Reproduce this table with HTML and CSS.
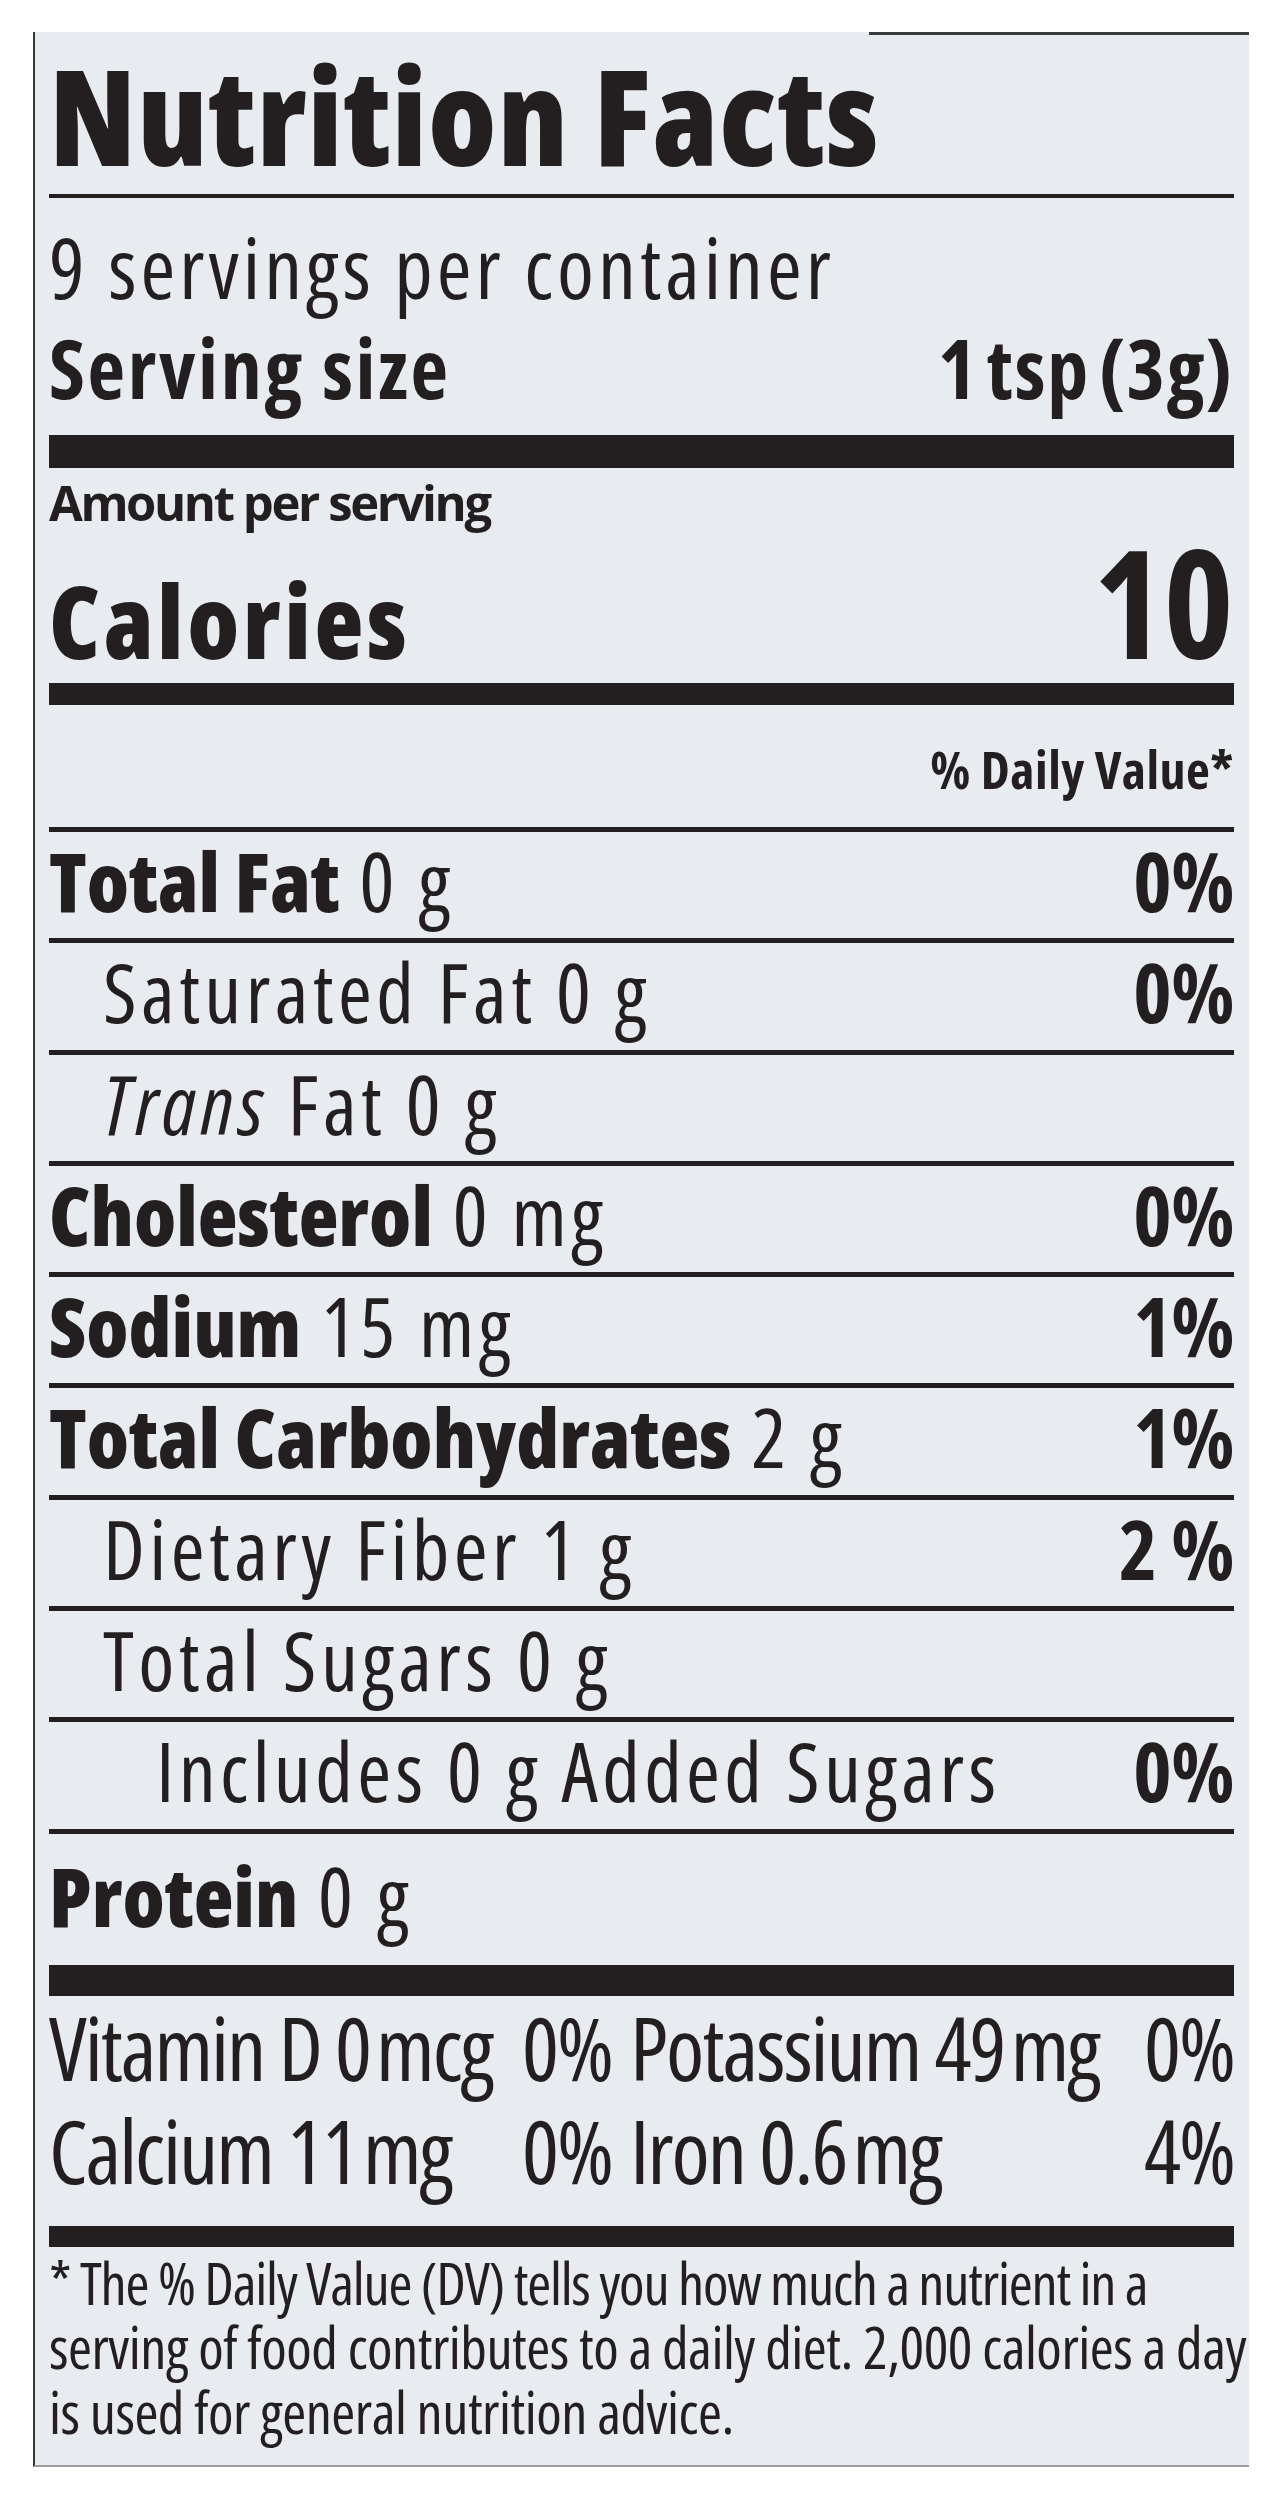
FILE: index.html
```html
<!DOCTYPE html>
<html lang="en">
<head>
<meta charset="utf-8">
<title>Nutrition Facts</title>
<link rel="stylesheet" href="styles.css">
</head>
<body>
<div class="label">
  <h1 class="title">Nutrition Facts</h1>
  <div class="rule-thin"></div>
  <p class="servings">9 servings per container</p>
  <div class="serving-size"><span>Serving size</span><span class="ss-value">1 tsp (3g)</span></div>
  <div class="bar bar-top"></div>
  <p class="amount">Amount per serving</p>
  <div class="calories"><span class="cal-label">Calories</span><span class="cal-value">10</span></div>
  <div class="bar bar-cal"></div>
  <p class="dv-head">% Daily Value*</p>

  <div class="nutrient"><span class="name"><b>Total Fat</b><span class="amt"> 0 g</span></span><b class="pct">0%</b></div>
  <div class="nutrient"><span class="name indent1"><span class="amt">Saturated Fat 0 g</span></span><b class="pct">0%</b></div>
  <div class="nutrient"><span class="name indent1"><i>Trans</i><span class="amt"> Fat 0 g</span></span></div>
  <div class="nutrient"><span class="name"><b>Cholesterol</b><span class="amt"> 0 mg</span></span><b class="pct">0%</b></div>
  <div class="nutrient"><span class="name"><b>Sodium</b><span class="amt"> 15 mg</span></span><b class="pct">1%</b></div>
  <div class="nutrient"><span class="name"><b>Total Carbohydrates</b><span class="amt"> 2 g</span></span><b class="pct">1%</b></div>
  <div class="nutrient"><span class="name indent1"><span class="amt">Dietary Fiber 1 g</span></span><b class="pct">2 %</b></div>
  <div class="nutrient"><span class="name indent1"><span class="amt">Total Sugars 0 g</span></span></div>
  <div class="nutrient"><span class="name indent2"><span class="amt">Includes 0 g Added Sugars</span></span><b class="pct">0%</b></div>
  <div class="nutrient nutrient-last"><span class="name"><b>Protein</b><span class="amt"> 0 g</span></span></div>

  <div class="bar bar-vit"></div>
  <div class="minerals">
    <span>Vitamin D 0&#8239;mcg</span><span class="m-pct">0%</span><span class="m-name">Potassium 49&#8239;mg</span><span class="m-pct">0%</span>
    <span>Calcium 11&#8239;mg</span><span class="m-pct">0%</span><span class="m-name">Iron 0.6&#8239;mg</span><span class="m-pct">4%</span>
  </div>
  <div class="bar bar-foot"></div>
  <div class="footnote">
    <span class="fn-line fn-tight">* The % Daily Value (DV) tells you how much a nutrient in a</span>
    <span class="fn-line">serving of food contributes to a daily diet. 2,000 calories a day</span>
    <span class="fn-line">is used for general nutrition advice.</span>
  </div>
</div>
</body>
</html>
```
FILE: styles.css
```css
html, body {
  margin: 0;
  padding: 0;
  background: #ffffff;
}

body {
  font-family: "Open Sans", "Noto Sans", sans-serif;
  color: #231f20;
  width: 1282px;
  height: 2499px;
  overflow: hidden;
}

.label {
  position: relative;
  box-sizing: border-box;
  width: 1216px;
  margin: 32px 0 0 33px;
  padding: 14px 15px 21px 14px;
  background: #e8ecf0;
  border-left: 2px solid #3a3a3a;
  border-bottom: 2px solid #9a9ca0;
}

.label::before {
  content: "";
  position: absolute;
  top: 0;
  right: 0;
  width: 380px;
  height: 3px;
  background: #3a3a3a;
}

.title {
  margin: 0;
  font-size: 133px;
  font-weight: 800;
  font-stretch: 75%;
  line-height: 137px;
  letter-spacing: 1px;
}

.rule-thin {
  height: 4px;
  margin-top: 11px;
  background: #231f20;
}

.servings {
  margin: 18px 0 0;
  font-size: 84px;
  font-weight: 400;
  font-stretch: 75%;
  line-height: 101px;
  letter-spacing: 4px;
}

.serving-size {
  display: flex;
  justify-content: space-between;
  font-size: 82px;
  font-weight: 700;
  font-stretch: 75%;
  line-height: 101px;
  letter-spacing: 2.7px;
}

.ss-value {
  letter-spacing: 2px;
  word-spacing: -0.1em;
}

.bar {
  background: #231f20;
}

.bar-top {
  height: 33px;
  margin-top: 17px;
}

.amount {
  margin: 0;
  font-size: 49px;
  font-weight: 700;
  font-stretch: 100%;
  line-height: 68px;
  letter-spacing: -2.4px;
}

.calories {
  display: flex;
  justify-content: space-between;
  align-items: baseline;
  height: 131px;
}

.cal-label {
  font-size: 101px;
  font-weight: 800;
  font-stretch: 75%;
  line-height: 0.9;
  letter-spacing: 3.5px;
}

.cal-value {
  font-size: 150px;
  font-weight: 700;
  font-stretch: 75%;
  line-height: 131px;
}

.bar-cal {
  height: 22px;
  margin-top: 16px;
}

.dv-head {
  margin: 0;
  padding-top: 5px;
  text-align: right;
  font-size: 52px;
  font-weight: 700;
  font-stretch: 75%;
  line-height: 117px;
  letter-spacing: 0.5px;
}

.nutrient {
  display: flex;
  justify-content: space-between;
  align-items: baseline;
  border-top: 5px solid #231f20;
  padding-bottom: 10.3px;
  font-size: 82px;
  font-weight: 400;
  font-stretch: 75%;
  line-height: 96px;
  white-space: nowrap;
}

.nutrient .name b {
  font-weight: 800;
  font-stretch: 75%;
  letter-spacing: 0;
}

.nutrient .amt,
.nutrient i {
  letter-spacing: 4.4px;
}

.nutrient i {
  font-style: italic;
}

.nutrient .pct {
  font-weight: 700;
  font-stretch: 75%;
  letter-spacing: -0.5px;
  text-align: right;
}

.nutrient-last {
  line-height: 122px;
  padding-bottom: 9px;
}

.indent1 {
  padding-left: 54px;
}

.indent2 {
  padding-left: 107px;
}

.bar-vit {
  height: 31px;
}

.minerals {
  display: grid;
  grid-template-columns: 460px 103px 1fr auto;
  font-size: 87px;
  font-weight: 400;
  font-stretch: 75%;
  line-height: 103px;
  letter-spacing: -2px;
  white-space: nowrap;
}

.m-pct {
  text-align: right;
}

.m-name {
  padding-left: 18px;
}

.bar-foot {
  height: 21px;
  margin-top: 24px;
}

.footnote {
  margin-top: 4px;
  font-size: 58px;
  font-weight: 400;
  font-stretch: 75%;
  line-height: 64.5px;
  letter-spacing: -0.5px;
  white-space: nowrap;
}

.fn-line {
  display: block;
}

.fn-tight {
  letter-spacing: -1.2px;
}
```
